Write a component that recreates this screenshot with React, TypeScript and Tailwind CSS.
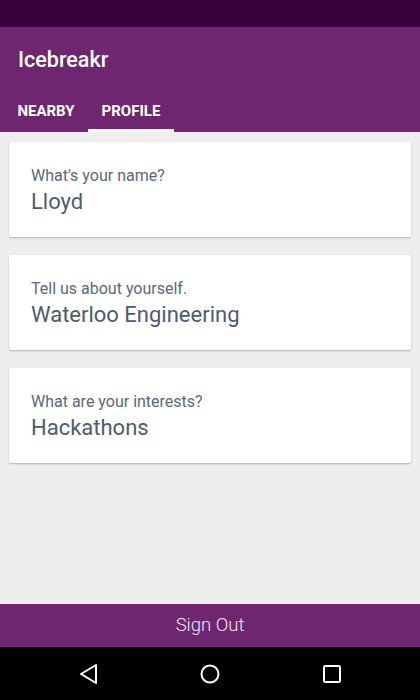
import { ReactNode } from "react";

const Field = ({ label, value }: { label: string; value: string }) => (
    <div className="rounded-[2px] bg-white px-[22px] pt-[24px] pb-[21px] shadow-[0_1px_2px_rgba(0,0,0,0.25)]">
        <div className="text-[16px] leading-[20px] text-[#5a687c]">{label}</div>
        <div className="mt-[2px] text-[22px] leading-[28px] text-[#4d5c71]">{value}</div>
    </div>
);

const NavButton = ({ children }: { children: ReactNode }) => (
    <div className="flex h-full w-[60px] items-center justify-center">{children}</div>
);

export default function App() {
    return (
        <div className="flex h-[700px] w-[420px] flex-col bg-[#eeeeee] font-['Roboto',sans-serif]">
            <div className="h-[27px] bg-[#36003a]" />
            <div className="flex h-[105px] flex-col bg-[#6f2670]">
                <div className="flex h-[65px] items-center px-[18px] pt-[1px] text-[21.5px] font-medium text-white">Icebreakr</div>
                <div className="flex flex-1 pl-1 text-[15px] font-bold uppercase text-white">
                    <div className="flex w-[84px] items-center justify-center pb-[2px]">Nearby</div>
                    <div className="flex w-[86px] items-center justify-center border-b-[3px] border-white pt-[1px]">Profile</div>
                </div>
            </div>
            <div className="flex flex-1 flex-col gap-[18px] px-[9px] pt-[10px]">
                <Field label="What's your name?" value="Lloyd" />
                <Field label="Tell us about yourself." value="Waterloo Engineering" />
                <Field label="What are your interests?" value="Hackathons" />
            </div>
            <div className="flex h-[43px] items-center justify-center bg-[#6f2670] pt-[1px] text-[18.5px] font-light text-[#f3e6f3]">Sign Out</div>
            <div className="flex h-[53px] items-center justify-between bg-black px-[58px]">
                <NavButton>
                    <svg width="22" height="24" viewBox="0 0 22 24" fill="none" stroke="white" strokeWidth="2" strokeLinejoin="round">
                        <path d="M19 3 L4 12 L19 21 Z" />
                    </svg>
                </NavButton>
                <NavButton>
                    <svg width="22" height="22" viewBox="0 0 22 22" fill="none" stroke="white" strokeWidth="2">
                        <circle cx="11" cy="11" r="8.5" />
                    </svg>
                </NavButton>
                <NavButton>
                    <svg width="20" height="20" viewBox="0 0 20 20" fill="none" stroke="white" strokeWidth="2">
                        <rect x="2" y="2" width="16" height="16" rx="1" />
                    </svg>
                </NavButton>
            </div>
        </div>
    );
}
